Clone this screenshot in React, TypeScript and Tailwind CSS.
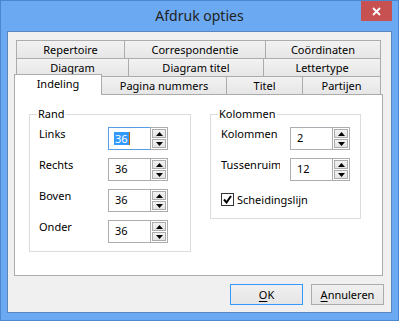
import type { ReactNode } from 'react'

function Tab({ className, children }: { className: string; children: ReactNode }) {
  return (
    <div
      className={`-ml-px flex h-[18px] shrink-0 items-center justify-center border border-b-0 border-[#acacac] bg-gradient-to-b from-[#f2f2f2] to-[#e6e6e6] leading-none first:ml-0 ${className}`}
    >
      {children}
    </div>
  )
}

function Arrow({ up }: { up?: boolean }) {
  return (
    <svg width="7" height="4" viewBox="0 0 7 4">
      {up ? <path d="M0 4 L3.5 0 L7 4 Z" fill="#000" /> : <path d="M0 0 L7 0 L3.5 4 Z" fill="#000" />}
    </svg>
  )
}

function Spin({ value, focused }: { value: string; focused?: boolean }) {
  return (
    <div className="flex h-[23px] w-[60px] shrink-0">
      <div
        className={`flex h-full w-[43px] items-center border bg-white pl-[5px] ${
          focused ? 'border-[#569de5]' : 'border-[#abadb3]'
        }`}
      >
        {focused ? (
          <span className="flex items-center">
            <span className="bg-[#3399ff] px-px leading-[13px] text-white">{value}</span>
            <span className="h-[13px] w-px bg-[#c86400]" />
          </span>
        ) : (
          <span className="pl-px">{value}</span>
        )}
      </div>
      <div className="-ml-px flex h-full w-[18px] flex-col gap-px border border-[#acacac] bg-white p-px">
        <div className="flex flex-1 items-center justify-center border border-[#acacac] bg-gradient-to-b from-[#f2f2f2] to-[#e4e4e4]">
          <Arrow up />
        </div>
        <div className="flex flex-1 items-center justify-center border border-[#acacac] bg-gradient-to-b from-[#f2f2f2] to-[#e4e4e4]">
          <Arrow />
        </div>
      </div>
    </div>
  )
}

function Group({ title, className, children }: { title: string; className: string; children: ReactNode }) {
  return (
    <div className={`relative mt-[19px] shrink-0 border border-[#dcdcdc] ${className}`}>
      <span className="absolute -top-[9px] left-[7px] bg-white px-px leading-[15px]">{title}</span>
      {children}
    </div>
  )
}

export default function App() {
  const rand = ['Links', 'Rechts', 'Boven', 'Onder']

  return (
    <div className="flex h-[321px] w-[399px] flex-col border border-[#4b86cf] bg-[#6ba9f2] font-['Noto_Sans',sans-serif] text-[11px] text-black">
      <div className="relative h-[30px] shrink-0">
        <div className="text-center text-[14px] leading-[29px] text-[#222]">Afdruk opties</div>
        <div className="absolute right-[6px] top-0 flex h-[20px] w-[31px] items-center justify-center bg-[#c75050]">
          <svg width="9" height="9" viewBox="0 0 9 9">
            <path d="M1 1 L8 8 M8 1 L1 8" stroke="#fff" strokeWidth="1.8" />
          </svg>
        </div>
      </div>

      <div className="mx-[6px] flex h-[282px] shrink-0 flex-col border border-[#5a86bd] bg-[#f0f0f0] px-[6px] pt-[8px]">
        <div className="w-[369px]">
          <div className="ml-[2px] flex">
            <Tab className="w-[109px]">Repertoire</Tab>
            <Tab className="w-[142px]">Correspondentie</Tab>
            <Tab className="w-[116px]">Coördinaten</Tab>
          </div>
          <div className="ml-[2px] flex">
            <Tab className="w-[113px]">Diagram</Tab>
            <Tab className="w-[136px]">Diagram titel</Tab>
            <Tab className="w-[118px]">Lettertype</Tab>
          </div>
          <div className="flex h-[18px] items-end">
            <div className="relative z-10 -mb-px flex h-[21px] w-[88px] shrink-0 items-center justify-center border border-b-0 border-[#acacac] bg-white pb-[2px]">
              Indeling
            </div>
            <Tab className="w-[126px]">Pagina nummers</Tab>
            <Tab className="w-[77px]">Titel</Tab>
            <Tab className="w-[79px]">Partijen</Tab>
          </div>

          <div className="flex h-[182px] border border-[#acacac] bg-white pl-[14px]">
            <Group title="Rand" className="h-[138px] w-[162px]">
              <div className="flex flex-col gap-[8px] pl-[9px] pt-[12px]">
                {rand.map((r, i) => (
                  <div key={r} className="flex items-start">
                    <span className="-mt-px w-[69px] leading-[15px]">{r}</span>
                    <Spin value="36" focused={i === 0} />
                  </div>
                ))}
              </div>
            </Group>

            <Group title="Kolommen" className="ml-[19px] h-[105px] w-[151px]">
              <div className="flex flex-col gap-[8px] pl-[10px] pt-[12px]">
                <div className="flex items-start">
                  <span className="-mt-px w-[59px] overflow-hidden whitespace-nowrap leading-[15px]">Kolommen</span>
                  <span className="w-[10px]" />
                  <Spin value="2" />
                </div>
                <div className="flex items-start">
                  <span className="-mt-px w-[59px] overflow-hidden whitespace-nowrap leading-[15px]">Tussenruimte</span>
                  <span className="w-[10px]" />
                  <Spin value="12" />
                </div>
                <div className="mt-[3px] flex items-center gap-[3px]">
                  <span className="flex h-[13px] w-[13px] items-center justify-center border border-[#333] bg-white">
                    <svg width="9" height="9" viewBox="0 0 9 9">
                      <path d="M1 4.5 L3.5 7.5 L8 1" stroke="#000" strokeWidth="2" fill="none" />
                    </svg>
                  </span>
                  <span className="leading-[15px]">Scheidingslijn</span>
                </div>
              </div>
            </Group>
          </div>
        </div>

        <div className="mt-[8px] flex justify-end gap-[8px] pr-[1px]">
          <button className="h-[21px] w-[73px] border border-[#3399ff] bg-gradient-to-b from-[#f0f0f0] to-[#e5e5e5] leading-none">
            <span className="underline underline-offset-2">O</span>K
          </button>
          <button className="h-[21px] w-[73px] border border-[#acacac] bg-gradient-to-b from-[#f0f0f0] to-[#e5e5e5] leading-none">
            <span className="underline underline-offset-2">A</span>nnuleren
          </button>
        </div>
      </div>
    </div>
  )
}
